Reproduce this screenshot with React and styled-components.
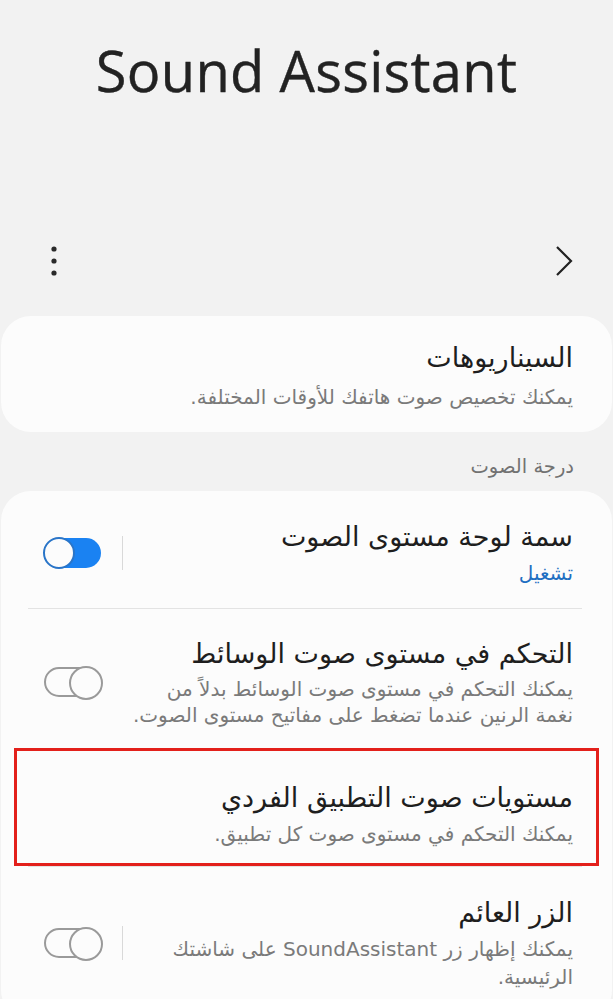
import React from "react";
import styled, { createGlobalStyle } from "styled-components";

const Global = createGlobalStyle`
  html, body { margin: 0; padding: 0; background: #f2f2f2; }
  body { font-family: "DejaVu Sans", "Noto Sans", sans-serif; }
  * { box-sizing: border-box; }
`;

const Page = styled.div`
  width: 613px;
  height: 999px;
  overflow: hidden;
  background: #f2f2f2;
`;

const Header = styled.header`
  padding-top: 33px;
  height: 107px;
  display: flex;
  justify-content: center;
`;

const AppTitle = styled.h1`
  margin: 0;
  font-family: "Open Sans", sans-serif;
  font-weight: 400;
  font-size: 56px;
  line-height: 74px;
  color: #222;
  letter-spacing: 0.3px;
  -webkit-text-stroke: 0.4px #222;
`;

const Toolbar = styled.div`
  margin-top: 121px;
  height: 66px;
  padding: 0 39px 0 44px;
  display: flex;
  align-items: center;
  justify-content: space-between;
`;

const IconButton = styled.button`
  border: 0;
  background: none;
  padding: 0;
  width: 20px;
  height: 36px;
  display: flex;
  align-items: center;
  justify-content: center;
  color: #222;
`;

const Card = styled.section`
  margin: ${(p) => p.$mt || 0}px 1px 0 1px;
  background: #fcfcfc;
  border-radius: 30px;
  direction: rtl;
  overflow: hidden;
`;

const SimpleItem = styled.div`
  padding: 24px 39px 21px 39px;
  display: flex;
  flex-direction: column;
  gap: 7px;
`;

const Title = styled.div`
  font-size: 27px;
  line-height: 36px;
  color: #1e1e1e;
`;

const Sub = styled.div`
  font-size: 20px;
  line-height: ${(p) => p.$lh || 28}px;
  color: ${(p) => (p.$accent ? "#1f6fc2" : "#7a7a7a")};
`;

const SectionLabel = styled.div`
  direction: rtl;
  margin: 23px 0 12px;
  padding-right: 39px;
  font-size: 19.5px;
  line-height: 24px;
  color: #727272;
`;

const Row = styled.div`
  position: relative;
  display: flex;
  align-items: center;
  padding: ${(p) => p.$pt}px 39px ${(p) => p.$pb}px 43px;
  &::before {
    content: "";
    display: ${(p) => (p.$divider ? "block" : "none")};
    position: absolute;
    bottom: -1px;
    right: 30px;
    left: 27px;
    height: 1px;
    background: #e3e3e3;
  }
  &::after {
    content: "";
    display: ${(p) => (p.$highlight ? "block" : "none")};
    position: absolute;
    top: -2px;
    bottom: 0;
    left: 13px;
    right: 13px;
    border: 3px solid #e3201b;
    z-index: 2;
  }
`;

const RowText = styled.div`
  flex: 1;
  display: flex;
  flex-direction: column;
  gap: 4px;
`;

const Separator = styled.div`
  width: 1px;
  height: 34px;
  background: #d9d9d9;
  margin: 0 20px 0 21px;
`;

const Spacer = styled.div`
  width: 26px;
`;

const Track = styled.div`
  position: relative;
  flex: none;
  width: 57px;
  height: 30px;
  border-radius: 15px;
  direction: ltr;
  background: ${(p) => (p.$on ? "#1a82f2" : "transparent")};
  border: ${(p) => (p.$on ? "0" : "2px solid #9a9a9a")};
`;

const Knob = styled.div`
  position: absolute;
  top: ${(p) => (p.$on ? "-1px" : "-3px")};
  ${(p) => (p.$on ? "left: -1px;" : "right: -4px;")}
  width: ${(p) => (p.$on ? 32 : 34)}px;
  height: ${(p) => (p.$on ? 32 : 34)}px;
  border-radius: 50%;
  background: #fcfcfc;
  border: 2px solid ${(p) => (p.$on ? "#2a75c8" : "#9a9a9a")};
`;

const Toggle = ({ on }) => (
  <Track $on={on}>
    <Knob $on={on} />
  </Track>
);

export default function App() {
  return (
    <Page>
      <Global />
      <Header>
        <AppTitle>Sound Assistant</AppTitle>
      </Header>
      <Toolbar>
        <IconButton aria-label="more">
          <svg width="6" height="30" viewBox="0 0 6 30">
            <circle cx="3" cy="3" r="2.6" fill="#2a2a2a" />
            <circle cx="3" cy="15" r="2.6" fill="#2a2a2a" />
            <circle cx="3" cy="27" r="2.6" fill="#2a2a2a" />
          </svg>
        </IconButton>
        <IconButton aria-label="next">
          <svg width="18" height="32" viewBox="0 0 18 32">
            <path d="M2 2 L16 16 L2 30" fill="none" stroke="#222" strokeWidth="2.2" />
          </svg>
        </IconButton>
      </Toolbar>

      <Card $mt={22}>
        <SimpleItem>
          <Title>السيناريوهات</Title>
          <Sub>يمكنك تخصيص صوت هاتفك للأوقات المختلفة.</Sub>
        </SimpleItem>
      </Card>

      <SectionLabel>درجة الصوت</SectionLabel>

      <Card>
        <Row $pt={28} $pb={21} $divider>
          <RowText>
            <Title>سمة لوحة مستوى الصوت</Title>
            <Sub $accent>تشغيل</Sub>
          </RowText>
          <Separator />
          <Toggle on />
        </Row>
        <Row $pt={28} $pb={22} $divider>
          <RowText>
            <Title>التحكم في مستوى صوت الوسائط</Title>
            <Sub $lh={26}>
              يمكنك التحكم في مستوى صوت الوسائط بدلاً من نغمة الرنين عندما تضغط على مفاتيح مستوى الصوت.
            </Sub>
          </RowText>
          <Spacer />
          <Toggle />
        </Row>
        <Row $pt={30} $pb={18} $divider $highlight>
          <RowText>
            <Title>مستويات صوت التطبيق الفردي</Title>
            <Sub>يمكنك التحكم في مستوى صوت كل تطبيق.</Sub>
          </RowText>
        </Row>
        <Row $pt={29} $pb={29}>
          <RowText>
            <Title>الزر العائم</Title>
            <Sub>يمكنك إظهار زر SoundAssistant على شاشتك الرئيسية.</Sub>
          </RowText>
          <Separator />
          <Toggle />
        </Row>
      </Card>
    </Page>
  );
}
